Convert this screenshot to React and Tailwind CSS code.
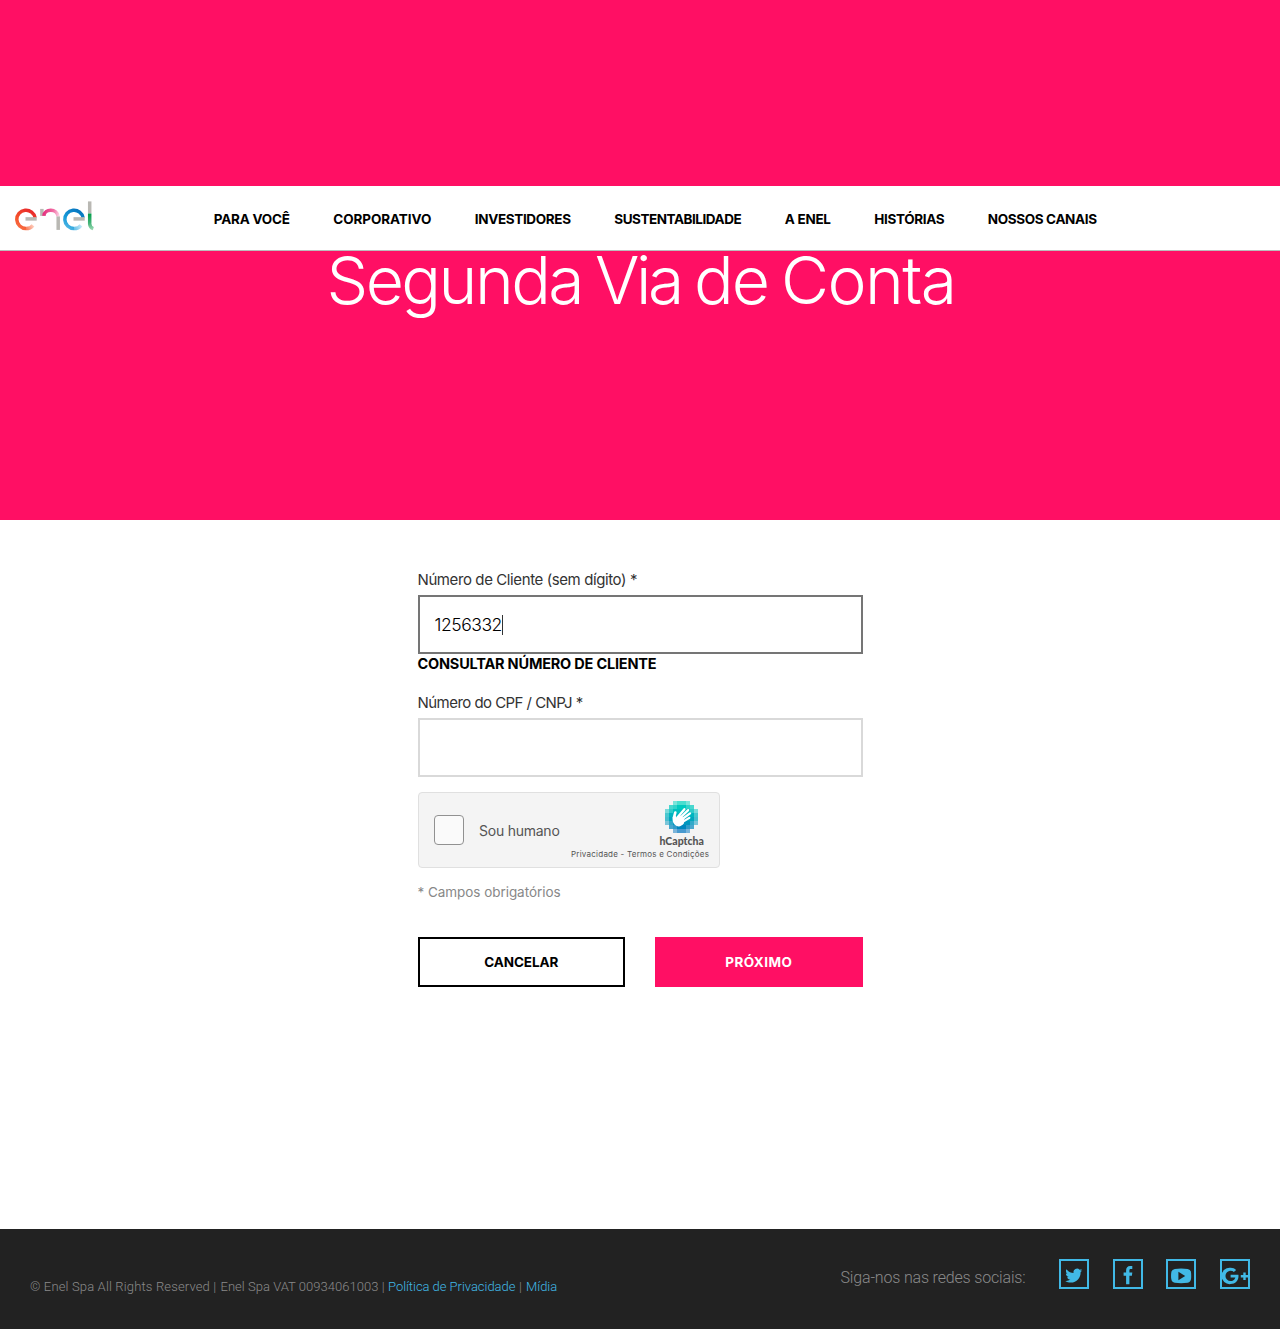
const NAV = [
  { label: "PARA VOCÊ", cls: "w-[76px] tracking-[-0.22px]" },
  { label: "CORPORATIVO", cls: "w-[98px] tracking-[-0.08px]" },
  { label: "INVESTIDORES", cls: "w-[96px] tracking-[-0.34px]" },
  { label: "SUSTENTABILIDADE", cls: "w-[127px] tracking-[-0.46px]" },
  { label: "A ENEL", cls: "w-[46px] tracking-[-0.27px]" },
  { label: "HISTÓRIAS", cls: "w-[70px] tracking-[-0.34px]" },
  { label: "NOSSOS CANAIS", cls: "w-[109px] tracking-[-0.35px]" },
];

function EnelLogo() {
  return (
    <svg className="block" width="80" height="30" viewBox="0 -0.4 80 30" fill="none" strokeWidth="3.5">
      <defs>
        <linearGradient id="red" x1="20" y1="8" x2="6" y2="30" gradientUnits="userSpaceOnUse">
          <stop offset="0" stopColor="#e6212a" />
          <stop offset=".65" stopColor="#f5542c" />
          <stop offset="1" stopColor="#f9754a" />
        </linearGradient>
        <linearGradient id="redFade" x1="9" y1="28" x2="19" y2="23" gradientUnits="userSpaceOnUse">
          <stop offset="0" stopColor="#f6673d" />
          <stop offset="1" stopColor="#ffd9cc" />
        </linearGradient>
        <linearGradient id="pink" x1="29" y1="10" x2="45" y2="14" gradientUnits="userSpaceOnUse">
          <stop offset="0" stopColor="#e5317f" />
          <stop offset=".55" stopColor="#f26fa6" />
          <stop offset="1" stopColor="#fce3ee" />
        </linearGradient>
        <linearGradient id="blue" x1="67" y1="10" x2="54" y2="30" gradientUnits="userSpaceOnUse">
          <stop offset="0" stopColor="#0574be" />
          <stop offset=".6" stopColor="#189cda" />
          <stop offset="1" stopColor="#5dbce6" />
        </linearGradient>
        <linearGradient id="blueFade" x1="57" y1="28" x2="67" y2="23" gradientUnits="userSpaceOnUse">
          <stop offset="0" stopColor="#4bb4e4" />
          <stop offset="1" stopColor="#d3effa" />
        </linearGradient>
        <linearGradient id="green" x1="75" y1="13" x2="77" y2="29" gradientUnits="userSpaceOnUse">
          <stop offset="0" stopColor="#069f4d" />
          <stop offset=".5" stopColor="#41b275" />
          <stop offset="1" stopColor="#a3dcb9" />
        </linearGradient>
      </defs>
      <path d="M20.1 16.500 A9.200 9.200 0 1 0 11 27.200" stroke="url(#red)" />
      <path d="M11 27.200 Q15.500 27.200 18 24" stroke="url(#redFade)" />
      <path d="M10.500 17.500 H21.700" stroke="#b9b8b3" />
      <path d="M26.900 7.500 V14.500" stroke="#b9b8b3" />
      <path d="M28.900 14.500 C29.300 6.800 42.400 6.800 43.100 15" stroke="url(#pink)" />
      <path d="M43.200 15 V28.500" stroke="#b9b8b3" />
      <path d="M68.100 16.500 A9.200 9.200 0 1 0 59 27.200" stroke="url(#blue)" />
      <path d="M59 27.200 Q63.500 27.200 66 24" stroke="url(#blueFade)" />
      <path d="M58.500 17.500 H69.700" stroke="#b9b8b3" />
      <path d="M74.700 0 V12" stroke="#b9b8b3" />
      <path d="M74.700 12 V22.500 Q75 26.300 78.300 27.300" stroke="url(#green)" />
    </svg>
  );
}

const CELLS = [
  [0, 0, 0.5, 0.7, 0.7, 0.5, 0, 0],
  [0, 0.7, 0.8, 1, 1, 0.8, 0.7, 0],
  [0.5, 0.8, 1, 1, 1, 1, 0.8, 0.5],
  [0.7, 1, 1, 1, 1, 1, 1, 0.7],
  [0.7, 1, 1, 1, 1, 1, 1, 0.7],
  [0.5, 0.8, 1, 1, 1, 1, 0.8, 0.5],
  [0, 0.7, 0.8, 1, 1, 0.8, 0.7, 0],
  [0, 0, 0.5, 0.7, 0.7, 0.5, 0, 0],
];
const ROWS = ["#00d4bf", "#00cabf", "#00c0bf", "#00b4bf", "#00a6be", "#0096be", "#0086be", "#0074bf"];

function CaptchaMark() {
  return (
    <svg className="block" width="33" height="32" viewBox="0 0 32 32" preserveAspectRatio="none">
      {CELLS.map((row, y) =>
        row.map((o, x) =>
          o ? <rect key={`${x}-${y}`} x={x * 4} y={y * 4} width="4" height="4" fill={ROWS[y]} opacity={o} shapeRendering="crispEdges" /> : null
        )
      )}
      <g stroke="#fff" strokeLinecap="round" fill="none">
        <path d="M10 11.500 L8.700 16.500" strokeWidth="2.600" />
        <path d="M12 16.500 L18.800 8.200" strokeWidth="2.200" />
        <path d="M14 17.500 L22.500 9.100" strokeWidth="2.200" />
        <path d="M15.500 19 L24.300 12.400" strokeWidth="2.200" />
        <path d="M16 21.600 L23.600 16.900" strokeWidth="2.200" />
      </g>
      <path d="M7.500 16 C6.800 20 8.300 23.500 11.300 25 C13.800 26.200 16.300 25 18.300 22.600 L18.800 17.500 L14.800 14.500 L11.500 16.800 L10 14.500 Z" fill="#fff" />
    </svg>
  );
}

const SOCIAL = [
  {
    name: "Twitter",
    d: "M23.300 11.300c-.6.300-1.300.5-2 .6.700-.4 1.200-1.100 1.500-1.900-.7.400-1.400.7-2.200.8a3.500 3.500 0 0 0-6 3.200c-2.900-.1-5.500-1.500-7.200-3.700-.9 1.600-.4 3.600 1.100 4.700-.6 0-1.100-.2-1.600-.4 0 1.700 1.200 3.100 2.800 3.500-.5.100-1 .2-1.600.1.400 1.400 1.700 2.400 3.300 2.400A7 7 0 0 1 6.300 22c1.600 1 3.400 1.600 5.400 1.600 6.500 0 10.200-5.500 9.900-10.500.7-.5 1.300-1.100 1.700-1.800z",
  },
  { name: "Facebook", d: "M19.300 7v3.100h-1.500c-1.200 0-1.400.6-1.400 1.400v2h2.900l-.4 3.200h-2.500v8.500h-3.300v-8.500h-2.500v-3.200h2.500v-2.300c0-2.700 1.600-4.300 3.900-4.300 1.100 0 2 .1 2.300.1z" },
  { name: "YouTube", d: "M8.800 9.900Q15 9 21.700 9.900Q24.900 10.200 25.100 13.900Q25.300 17 25.100 19.600Q24.900 23.200 21.700 23.800Q15 24.700 8.800 23.800Q5.600 23.400 5.200 19.600Q4.900 17 5.200 13.900Q5.600 10.200 8.800 9.900ZM12.400 12.700V21.300L19.200 17Z" },
  { name: "Google Plus", d: "M10.600 15.700h7.800c.1.400.1.900.1 1.400 0 4.700-3.100 8-7.900 8a8.200 8.200 0 1 1 0-16.300c2.200 0 4.100.8 5.500 2.100l-2.200 2.200a4.700 4.700 0 0 0-3.300-1.300 5.100 5.100 0 0 0 0 10.300c3.200 0 4.500-2.300 4.700-3.600h-4.700zM23.300 13.500h2.400v2.500H28.300v2.400h-2.600V21H23.300v-2.600h-2.500V16H23.300z" },
];

export default function App() {
  return (
    <div className="flex h-[1329px] w-full flex-col overflow-hidden bg-white font-['Inter',sans-serif] text-black">
      <section className="flex h-[520px] flex-col bg-[#ff0f64] pt-[186px]">
        <header className="flex h-[65px] items-start border-b border-[#bbbbbb] bg-white pl-[15px]">
          <div className="mt-[15px] w-[198.75px]">
            <EnelLogo />
          </div>
          <nav className="mt-[23px] flex gap-[43.5px] text-[13.5px] leading-5 font-bold whitespace-nowrap">
            {NAV.map((n) => (
              <a key={n.label} className={n.cls}>{n.label}</a>
            ))}
          </nav>
        </header>
        <h1 className="-mt-[11px] flex pl-[326.5px] text-[66px] leading-[80px] font-light whitespace-nowrap text-white">
          <span className="w-[268.5px] tracking-[-2.55px]">Segunda </span>
          <span className="w-[99px] tracking-[-3.4px]">Via </span>
          <span className="w-[87px] tracking-[-2.1px]">de </span>
          <span className="tracking-[-1.6px]">Conta</span>
        </h1>
      </section>

      <main className="mx-auto flex h-[709px] w-[445px] flex-col whitespace-nowrap">
        <label className="mt-[50px] text-[15px] leading-5 tracking-[-0.4px] text-[#333]">Número de Cliente (sem dígito) *</label>
        <div className="mt-[5px] flex h-[59px] items-center border-2 border-[#757575] pt-px pl-[15px]">
          <span className="text-[17.5px] font-light tracking-[-0.45px]">1256332</span>
          <span className="-mt-px h-5 w-px bg-[#333]" />
        </div>
        <a className="text-[14.5px] leading-5 font-bold tracking-[-0.2px]">CONSULTAR NÚMERO DE CLIENTE</a>
        <label className="mt-[19px] text-[15px] leading-5 tracking-[-0.54px] text-[#333]">Número do CPF / CNPJ *</label>
        <div className="mt-[5px] h-[59px] border-2 border-[#d9d9d9]" />

        <div className="mt-[15px] flex h-[76px] w-[302px] items-center rounded-[4px] border border-[#e0e0e0] bg-[#f4f4f4] pl-[15px]">
          <div className="h-[30px] w-[30px] rounded-[4px] border border-[#919191] bg-[#fafafa]" />
          <span className="ml-[15.5px] w-[92px] text-[14px] tracking-[-0.24px] text-[#555]">Sou humano</span>
          <div className="flex h-full w-[138px] flex-col text-[#555]">
            <div className="mt-2 ml-[94px]"><CaptchaMark /></div>
            <span className="mt-[2px] ml-[88.5px] font-['Lato',sans-serif] text-[10.5px] leading-[12px] font-black">hCaptcha</span>
            <span className="mt-[2px] text-[8px] leading-[11px] tracking-[0.23px]">Privacidade - Termos e Condições</span>
          </div>
        </div>

        <p className="mt-[14px] text-[13.5px] leading-5 tracking-[-0.05px] text-[#888]">* Campos obrigatórios</p>
        <div className="mt-[35px] grid h-[50px] grid-cols-2 gap-[30px] text-[13.5px] font-bold">
          <button className="border-2 border-black tracking-[-0.1px]">CANCELAR</button>
          <button className="bg-[#ff0f64] tracking-[0.42px] text-white">PRÓXIMO</button>
        </div>
      </main>

      <footer className="flex h-[100px] items-start justify-between bg-[#222] px-[30px] font-['Roboto',sans-serif] font-light whitespace-nowrap text-[#8a8a8a]">
        <p className="mt-12 flex text-[13px] leading-5">
          <span className="w-[190.5px] tracking-[0.15px]">© Enel Spa All Rights Reserved | </span>
          <span className="w-[167.5px] tracking-[0.03px]">Enel Spa VAT 00934061003 |</span>
          <a className="w-[131px] tracking-[-0.04px] text-[#41b9e6]">Política de Privacidade</a>
          <span className="w-[7px]">|</span>
          <a className="text-[#41b9e6]">Mídia</a>
        </p>
        <div className="flex">
          <span className="mt-[37px] mr-[33.5px] w-[185px] text-[16px] leading-6 tracking-[-0.17px]">Siga-nos nas redes sociais:</span>
          <div className="mt-[30px] flex gap-[23.67px]">
            {SOCIAL.map((s) => (
              <a key={s.name} aria-label={s.name} className="h-[30px] w-[30px] border-2 border-[#41b9e6]">
                <svg className="-m-[2px] block max-w-none" width="30" height="30" viewBox="0 0 30 30" fill="#41b9e6" fillRule="evenodd">
                  <path d={s.d} />
                </svg>
              </a>
            ))}
          </div>
        </div>
      </footer>
    </div>
  );
}
